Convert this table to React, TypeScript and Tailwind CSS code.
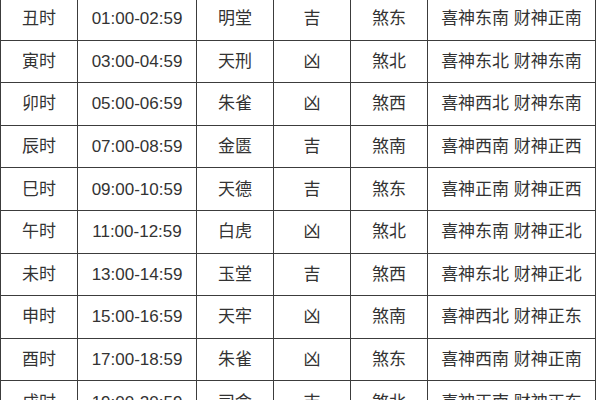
const rows = [
  ['丑时', '01:00-02:59', '明堂', '吉', '煞东', '喜神东南 财神正南'],
  ['寅时', '03:00-04:59', '天刑', '凶', '煞北', '喜神东北 财神东南'],
  ['卯时', '05:00-06:59', '朱雀', '凶', '煞西', '喜神西北 财神东南'],
  ['辰时', '07:00-08:59', '金匮', '吉', '煞南', '喜神西南 财神正西'],
  ['巳时', '09:00-10:59', '天德', '吉', '煞东', '喜神正南 财神正西'],
  ['午时', '11:00-12:59', '白虎', '凶', '煞北', '喜神东南 财神正北'],
  ['未时', '13:00-14:59', '玉堂', '吉', '煞西', '喜神东北 财神正北'],
  ['申时', '15:00-16:59', '天牢', '凶', '煞南', '喜神西北 财神正东'],
  ['酉时', '17:00-18:59', '朱雀', '凶', '煞东', '喜神西南 财神正南'],
  ['戌时', '19:00-20:59', '司命', '吉', '煞北', '喜神正南 财神正东'],
]

export default function App() {
  return (
    <div className="w-[600px] h-[400px] overflow-hidden bg-white">
      <table
        className="-mt-[3px] table-fixed border-collapse w-[595px] text-[17px] text-[#333]"
        style={{ fontFamily: '"Liberation Sans", "Noto Sans CJK SC", sans-serif' }}
      >
        <colgroup>
          <col className="w-[77px]" />
          <col className="w-[119px]" />
          <col className="w-[77px]" />
          <col className="w-[77px]" />
          <col className="w-[77px]" />
          <col className="w-[168px]" />
        </colgroup>
        <tbody>
          {rows.map((row) => (
            <tr key={row[0]} className="h-[42.6px]">
              {row.map((cell, i) => (
                <td
                  key={i}
                  className="border-[1.5px] border-[#3c3c3c] text-center align-middle p-0 leading-none whitespace-nowrap"
                >
                  {cell}
                </td>
              ))}
            </tr>
          ))}
        </tbody>
      </table>
    </div>
  )
}
